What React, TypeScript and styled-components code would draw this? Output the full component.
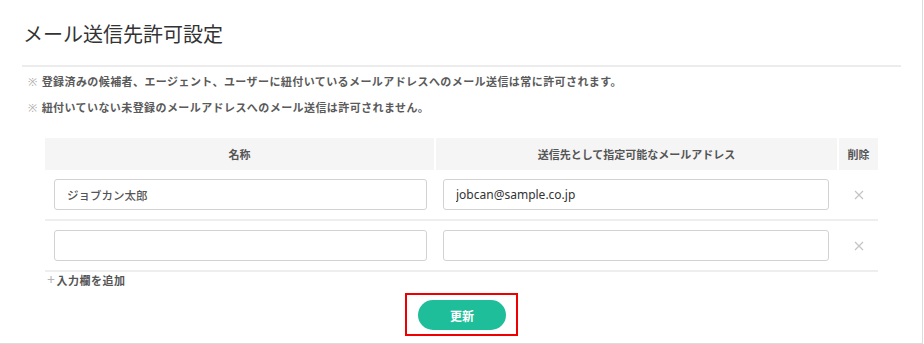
import React, { useState } from 'react';
import styled, { createGlobalStyle } from 'styled-components';

const GlobalStyle = createGlobalStyle`
  body {
    margin: 0;
    background: #fff;
    font-family: 'Noto Sans', 'Noto Sans CJK JP', sans-serif;
    -webkit-font-smoothing: antialiased;
  }
`;

const Card = styled.div`
  box-sizing: border-box;
  width: 923px;
  height: 344px;
  padding: 0 21px 0 22px;
  border-right: 1px solid #dcdcdc;
  border-bottom: 1px solid #dcdcdc;
  background: #fff;
`;

const Title = styled.h1`
  margin: 0;
  padding: 21px 0 16px 1px;
  border-bottom: 2px solid #ececec;
  font-size: 20px;
  line-height: 28px;
  font-weight: 400;
  color: #333;
`;

const Notes = styled.div`
  padding: 2px 0 0 6px;
`;

const Note = styled.p`
  margin: 0;
  font-size: 11px;
  line-height: 26px;
  font-weight: 700;
  color: #5a5a5a;
  letter-spacing: 0.42px;

  &::before {
    content: '※';
    color: #aaa;
    font-weight: 400;
    margin-right: 4px;
  }
`;

const Table = styled.div`
  margin: 17px 0 0 23px;
  width: 833px;
`;

const Row = styled.div<{ $head?: boolean }>`
  display: grid;
  grid-template-columns: 389px 401px 39px;
  column-gap: 2px;
  align-items: center;
  padding: ${(p) => (p.$head ? '0' : '9px 0')};
  border-bottom: ${(p) => (p.$head ? 'none' : '2px solid #eeeeee')};
`;

const HeadCell = styled.div`
  height: 32px;
  display: flex;
  align-items: center;
  justify-content: center;
  background: #f5f5f5;
  font-size: 11px;
  font-weight: 700;
  color: #555;
`;

const Cell = styled.div<{ $left: number; $right: number }>`
  padding: 0 ${(p) => p.$right}px 0 ${(p) => p.$left}px;
  display: flex;
  justify-content: center;
`;

const Input = styled.input`
  box-sizing: border-box;
  width: 100%;
  height: 31px;
  padding: 0 12px;
  border: 1px solid #d2d2d2;
  border-radius: 3px;
  font-family: 'Noto Sans', 'Noto Sans CJK JP', sans-serif;
  font-size: 11.5px;
  font-weight: 500;
  color: #555;
  outline: none;

  &[type='email'] {
    font-size: 12px;
    font-weight: 400;
    color: #333;
  }
`;

const RemoveButton = styled.button`
  border: none;
  background: none;
  padding: 0;
  width: 12px;
  height: 12px;
  cursor: pointer;
  display: flex;
  align-items: center;
  justify-content: center;
`;

const AddLink = styled.div`
  margin-left: 2px;
  font-size: 11px;
  line-height: 16px;
  font-weight: 700;
  color: #555;
  letter-spacing: 0.5px;

  span {
    color: #b5b5b5;
    font-weight: 400;
    font-size: 14px;
    margin-right: 1px;
  }
`;

const Footer = styled.div`
  display: flex;
  justify-content: center;
  margin-top: 4px;
`;

const Highlight = styled.div`
  border: 2px solid #ee0000;
  padding: 5px 10px 4px 11px;
`;

const SubmitButton = styled.button`
  width: 88px;
  height: 30px;
  border: none;
  border-radius: 15px;
  background: #1fbe9b;
  color: #fff;
  font-family: 'Noto Sans CJK JP', sans-serif;
  font-size: 12px;
  font-weight: 700;
  cursor: pointer;
`;

type Entry = { name: string; email: string };

function CrossIcon() {
  return (
    <svg width="10" height="10" viewBox="0 0 10 10">
      <path d="M1 1L9 9M9 1L1 9" stroke="#c4c4c4" strokeWidth="1.2" />
    </svg>
  );
}

export default function App() {
  const [entries, setEntries] = useState<Entry[]>([
    { name: 'ジョブカン太郎', email: 'jobcan@sample.co.jp' },
    { name: '', email: '' },
  ]);

  const update = (i: number, key: keyof Entry, value: string) =>
    setEntries((list) => list.map((e, j) => (j === i ? { ...e, [key]: value } : e)));

  return (
    <>
      <GlobalStyle />
      <Card>
        <Title>メール送信先許可設定</Title>
        <Notes>
          <Note>登録済みの候補者、エージェント、ユーザーに紐付いているメールアドレスへのメール送信は常に許可されます。</Note>
          <Note>紐付いていない未登録のメールアドレスへのメール送信は許可されません。</Note>
        </Notes>
        <Table>
          <Row $head>
            <HeadCell>名称</HeadCell>
            <HeadCell>送信先として指定可能なメールアドレス</HeadCell>
            <HeadCell>削除</HeadCell>
          </Row>
          {entries.map((e, i) => (
            <Row key={i}>
              <Cell $left={9} $right={7}>
                <Input value={e.name} onChange={(ev) => update(i, 'name', ev.target.value)} />
              </Cell>
              <Cell $left={7} $right={8}>
                <Input
                  type="email"
                  value={e.email}
                  onChange={(ev) => update(i, 'email', ev.target.value)}
                />
              </Cell>
              <Cell $left={0} $right={0}>
                <RemoveButton onClick={() => setEntries((list) => list.filter((_, j) => j !== i))}>
                  <CrossIcon />
                </RemoveButton>
              </Cell>
            </Row>
          ))}
          <AddLink onClick={() => setEntries((list) => [...list, { name: '', email: '' }])}>
            <span>+</span>入力欄を追加
          </AddLink>
        </Table>
        <Footer>
          <Highlight>
            <SubmitButton>更新</SubmitButton>
          </Highlight>
        </Footer>
      </Card>
    </>
  );
}
